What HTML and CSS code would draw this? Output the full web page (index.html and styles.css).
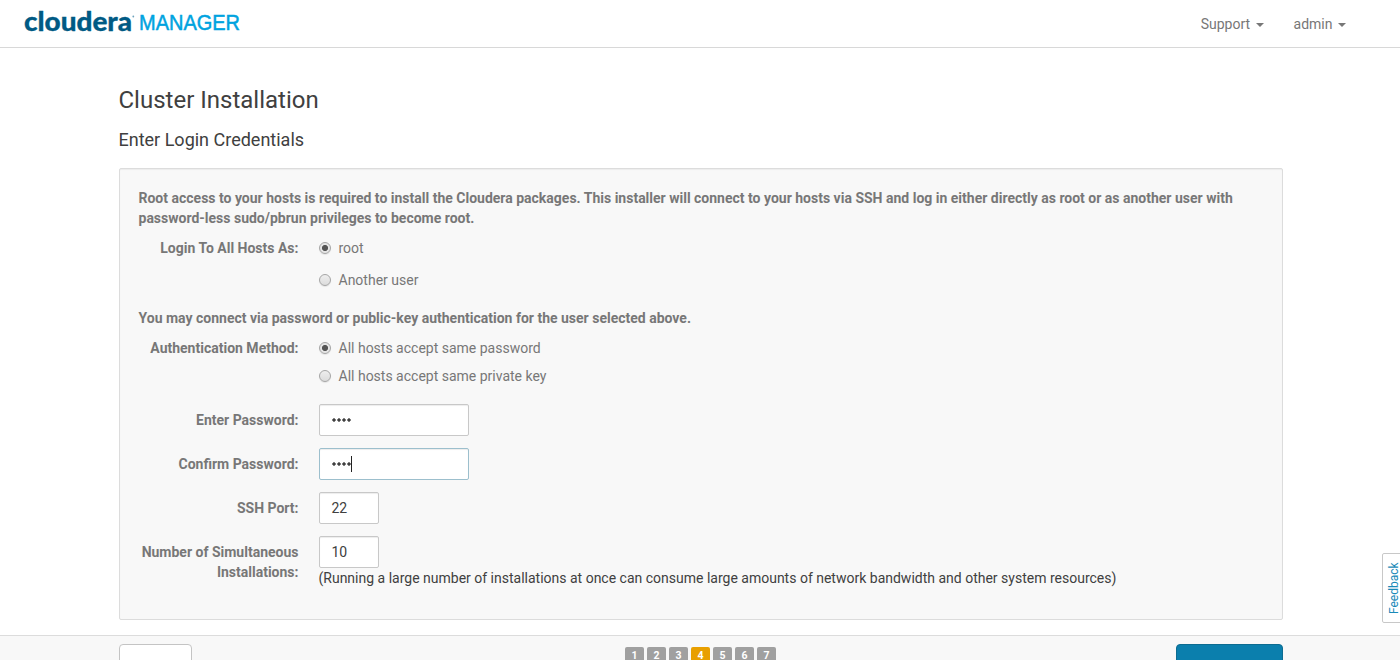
FILE: index.html
```html
<!DOCTYPE html>
<html lang="en">
<head>
<meta charset="utf-8">
<title>Cluster Installation - Cloudera Manager</title>
<link rel="stylesheet" href="styles.css">
</head>
<body>
<div class="page">
  <header class="navbar">
    <svg class="logo" width="224" height="36" viewBox="0 0 224 36" role="img" aria-label="cloudera manager">
      <text class="logo-brand" x="4" y="30.5" textLength="108" lengthAdjust="spacingAndGlyphs">cloudera</text>
      <circle cx="113.3" cy="16.5" r="0.9" fill="#6fa3bc"/>
      <text class="logo-product" x="119" y="30.4" textLength="101" lengthAdjust="spacingAndGlyphs">MANAGER</text>
    </svg>
    <nav class="menu">
      <a class="menu-item">Support<span class="caret"></span></a>
      <a class="menu-item">admin<span class="caret"></span></a>
    </nav>
  </header>

  <main class="content">
    <h1 class="title">Cluster Installation</h1>
    <h2 class="subtitle">Enter Login Credentials</h2>

    <form class="well">
      <p class="intro">Root access to your hosts is required to install the Cloudera packages. This installer will connect to your hosts via SSH and log in either directly as root or as another user with password-less sudo/pbrun privileges to become root.</p>
      <div class="row login-row">
        <span class="label">Login To All Hosts As:</span>
        <div class="options options-wide">
          <label class="option"><span class="radio checked"></span>root</label>
          <label class="option"><span class="radio"></span>Another user</label>
        </div>
      </div>
      <p class="intro">You may connect via password or public-key authentication for the user selected above.</p>
      <div class="row auth-row">
        <span class="label">Authentication Method:</span>
        <div class="options">
          <label class="option"><span class="radio checked"></span>All hosts accept same password</label>
          <label class="option"><span class="radio"></span>All hosts accept same private key</label>
        </div>
      </div>
      <div class="row field-row">
        <span class="label">Enter Password:</span>
        <div class="field"><span class="dots"><i></i><i></i><i></i><i></i></span></div>
      </div>
      <div class="row field-row">
        <span class="label">Confirm Password:</span>
        <div class="field focused"><span class="dots"><i></i><i></i><i></i><i></i></span><span class="cursor"></span></div>
      </div>
      <div class="row field-row">
        <span class="label">SSH Port:</span>
        <div class="field small">22</div>
      </div>
      <div class="row field-row">
        <span class="label">Number of Simultaneous Installations:</span>
        <div>
          <div class="field small">10</div>
          <div class="hint">(Running a large number of installations at once can consume large amounts of network bandwidth and other system resources)</div>
        </div>
      </div>
    </form>
  </main>

  <footer class="wizard-bar">
    <div class="wizard-inner">
      <div class="button back"></div>
      <div class="steps">
        <span class="step">1</span><span class="step">2</span><span class="step">3</span><span class="step current">4</span><span class="step">5</span><span class="step">6</span><span class="step">7</span>
      </div>
      <div class="button continue"></div>
    </div>
  </footer>
  <a class="feedback">Feedback</a>
</div>
</body>
</html>
```
FILE: styles.css
```css
* { box-sizing: border-box; }
body {
  margin: 0;
  font: 14px/20px Roboto, "Liberation Sans", sans-serif;
  color: #404040;
  background: #fff;
}
.page {
  position: relative;
  height: 660px;
  overflow: hidden;
  display: flex;
  flex-direction: column;
}
.navbar {
  flex: none;
  height: 48px;
  padding: 0 54px 0 20px;
  border-bottom: 1px solid #d8d8d8;
  display: flex;
  justify-content: space-between;
}
.logo { display: block; }
.logo-brand { font: 900 26.5px Lato, sans-serif; fill: #005a84; stroke: #005a84; stroke-width: 0.3px; }
.logo-product { font: 400 21.5px "Liberation Sans", sans-serif; fill: #00a3df; stroke: #00a3df; stroke-width: 0.5px; }
.menu { display: flex; gap: 30px; padding-top: 14px; color: #777; }
.menu-item { display: flex; }
.caret {
  width: 8px;
  height: 4px;
  margin: 9px 0 0 5.5px;
  border: 4px solid transparent;
  border-top-color: #777;
  border-bottom: 0;
}
.content { width: 1164px; margin-left: 119px; padding-top: 36px; }
.title { margin: 0 0 0 -0.5px; font-size: 24px; font-weight: 400; line-height: 32px; }
.subtitle { margin: 12px 0 16px -0.5px; font-size: 18px; font-weight: 400; line-height: 24px; }
.well {
  height: 452px;
  padding: 19px 19px 0 18.5px;
  border: 1px solid #dcdcdc;
  border-radius: 2px;
  background: #f8f8f8;
  box-shadow: inset 0 1px 1px rgba(0, 0, 0, 0.05);
  color: #777;
}
.intro { margin: 0 0 10px; font-weight: 700; }
.row { display: grid; grid-template-columns: 160px 1fr; column-gap: 20px; }
.label { text-align: right; font-weight: 700; }
.options { display: flex; flex-direction: column; gap: 8px; }
.options-wide { gap: 12px; }
.option { display: flex; }
.radio {
  width: 12px;
  height: 12px;
  margin: 4px 7.5px 0 0.5px;
  border: 1px solid #a5a5a5;
  border-radius: 50%;
  background: linear-gradient(#eee, #dcdcdc);
  box-shadow: 0 1px 1px rgba(0, 0, 0, 0.08);
}
.radio.checked { background: radial-gradient(circle, #555 2.7px, #e6e6e6 3.4px); }
.login-row, .auth-row { margin-bottom: 18px; }
.field-row { margin-bottom: 12px; }
.field-row .label { padding-top: 6px; }
.field {
  display: flex;
  align-items: center;
  width: 150px;
  height: 32px;
  padding: 0 12px;
  border: 1px solid #c8c8c8;
  border-radius: 2px;
  background: #fff;
  color: #404040;
  box-shadow: inset 0 1px 1px rgba(0, 0, 0, 0.075);
}
.field.small { width: 60px; }
.field.focused { border-color: #9cbfcd; }
.dots { display: flex; gap: 1px; margin: -1px 0 0 0; }
.dots i { width: 4px; height: 4px; background: radial-gradient(circle, #404040 1.3px, transparent 2.1px); }
.cursor { width: 1px; height: 16px; background: #222; }
.hint { color: #404040; }
.wizard-bar {
  flex: none;
  height: 60px;
  margin-top: 15px;
  border-top: 1px solid #dcdcdc;
  background: #f8f8f8;
}
.wizard-inner {
  width: 1164px;
  margin-left: 119px;
  padding-top: 8px;
  display: grid;
  grid-template-columns: 506px auto 1fr;
}
.button { height: 34px; border-radius: 4px; }
.back { width: 73px; border: 1px solid #c4c4c4; background: #fff; }
.continue { width: 107px; justify-self: end; border: 1px solid #0d6c91; background: #0b7fad; }
.steps { display: flex; gap: 3px; padding-top: 3px; }
.step {
  width: 19px;
  height: 17px;
  border-radius: 2px;
  background: #a0a0a0;
  color: #fff;
  font-size: 10.5px;
  font-weight: 700;
  line-height: 17px;
  text-align: center;
}
.step.current { background: #e89f00; }
.feedback {
  position: absolute;
  top: 553px;
  right: -2px;
  width: 20px;
  height: 70px;
  padding-right: 2px;
  border: 1px solid #c8c8c8;
  border-radius: 2px;
  background: #fff;
  color: #1a8ab8;
  font-size: 12px;
  line-height: 18px;
  text-align: center;
  writing-mode: vertical-rl;
  transform: rotate(180deg);
}
```
